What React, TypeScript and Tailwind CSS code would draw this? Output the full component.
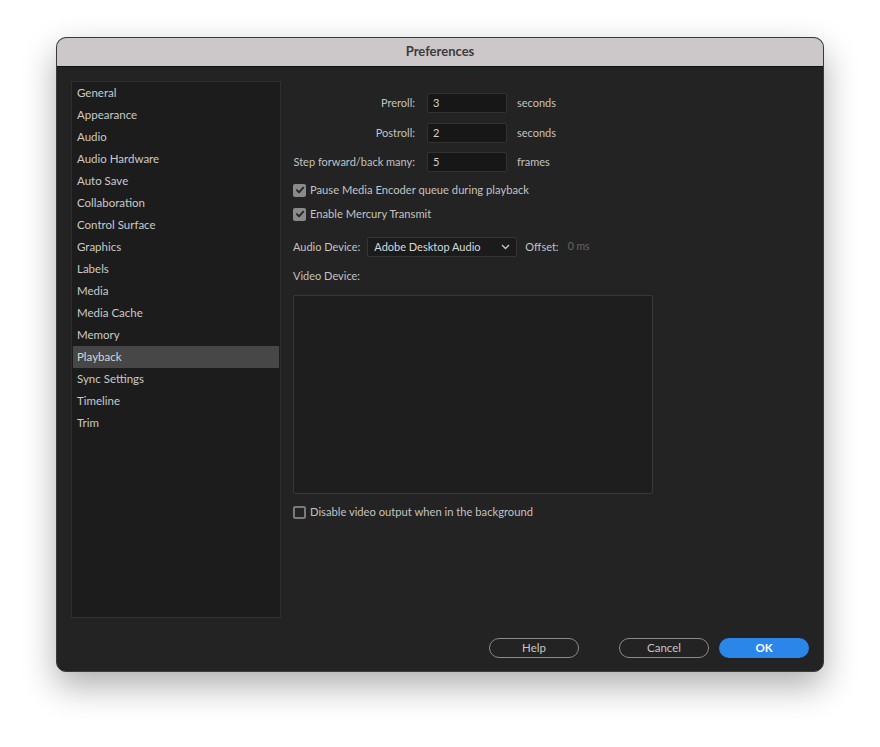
import React from 'react';

const sections = [
  'General',
  'Appearance',
  'Audio',
  'Audio Hardware',
  'Auto Save',
  'Collaboration',
  'Control Surface',
  'Graphics',
  'Labels',
  'Media',
  'Media Cache',
  'Memory',
  'Playback',
  'Sync Settings',
  'Timeline',
  'Trim',
];

const font = { fontFamily: 'Lato, "Open Sans", sans-serif' };

const NumberRow = ({ label, value, unit }: { label: string; value: string; unit: string }) => (
  <div className="flex items-center h-[20px] whitespace-nowrap">
    <span className="w-[123px] text-right pr-[1px]">{label}</span>
    <div className="ml-[11px] w-[80px] h-[20px] bg-[#171717] border border-[#323232] rounded-[2px] flex items-center pl-[5px] text-[#d0d0d0]">
      {value}
    </div>
    <span className="ml-[10px]">{unit}</span>
  </div>
);

const Checkbox = ({ checked, label }: { checked: boolean; label: string }) => (
  <div className="flex items-center h-[14px] whitespace-nowrap">
    <div
      className={`w-[13px] h-[13px] rounded-[2px] flex items-center justify-center ${
        checked ? 'bg-[#8a8a8a]' : 'border-2 border-[#7a7a7a]'
      }`}
    >
      {checked && (
        <svg width="10" height="10" viewBox="0 0 10 10">
          <path d="M1.8 5.2 L4 7.4 L8.3 2.6" fill="none" stroke="#242424" strokeWidth="1.8" strokeLinecap="round" strokeLinejoin="round" />
        </svg>
      )}
    </div>
    <span className="ml-[4px] text-[11.2px]">{label}</span>
  </div>
);

export default function App() {
  const active = 'Playback';
  return (
    <div className="w-[880px] h-[747px] bg-white pt-[37px] pl-[56px]" style={font}>
      <div className="w-[768px] h-[635px] rounded-[10px] overflow-hidden bg-[#232323] shadow-[0_14px_34px_rgba(0,0,0,0.32)] flex flex-col border border-[#3a3a3a]">
        <div className="h-[29px] bg-[#ccc8c9] border-b border-[#111] flex items-center justify-center shrink-0">
          <span className="text-[13px] font-bold text-[#3b3b3b]">Preferences</span>
        </div>

        <div className="flex flex-1 text-[11px] text-[#c2c2c2]">
          <div className="ml-[14px] mt-[14px] w-[210px] h-[537px] bg-[#1c1c1c] border border-[#2f2f2f] px-[1px] text-[11.5px]">
            {sections.map((s) => (
              <div
                key={s}
                className={`h-[22px] flex items-center pl-[4px] ${
                  s === active ? 'bg-[#474747] text-[#d6d6d6]' : 'text-[#cacaca]'
                }`}
              >
                {s}
              </div>
            ))}
          </div>

          <div className="flex flex-col">
            <div className="flex-1 ml-[12px] pt-[26px] flex flex-col">
              <div className="flex flex-col gap-[10px]">
                <NumberRow label="Preroll:" value="3" unit="seconds" />
                <NumberRow label="Postroll:" value="2" unit="seconds" />
                <div className="-mt-[1px]">
                  <NumberRow label="Step forward/back many:" value="5" unit="frames" />
                </div>
              </div>

              <div className="mt-[11px] flex flex-col gap-[10px]">
                <Checkbox checked label="Pause Media Encoder queue during playback" />
                <Checkbox checked label="Enable Mercury Transmit" />
              </div>

              <div className="mt-[16px] flex items-center h-[20px] whitespace-nowrap">
                <span>Audio Device:</span>
                <div className="ml-[7px] w-[150px] h-[20px] bg-[#1b1b1b] border border-[#353535] rounded-[2px] flex items-center justify-between pl-[6px] pr-[6px] text-[#d8d8d8]">
                  <span>Adobe Desktop Audio</span>
                  <svg width="9" height="6" viewBox="0 0 9 6">
                    <path d="M1 1 L4.5 4.5 L8 1" fill="none" stroke="#c8c8c8" strokeWidth="1.3" />
                  </svg>
                </div>
                <span className="ml-[8px]">Offset:</span>
                <span className="ml-[9px] text-[#666] text-[10.5px]">0 ms</span>
              </div>

              <div className="mt-[9px] h-[20px] flex items-center">Video Device:</div>

              <div className="mt-[9px] w-[360px] h-[199px] bg-[#1e1e1e] border border-[#383838] rounded-[2px]" />

              <div className="mt-[11px]">
                <Checkbox checked={false} label="Disable video output when in the background" />
              </div>
            </div>
          </div>
        </div>

        <div className="h-[33px] flex items-start justify-end pr-[14px] text-[11.5px] shrink-0">
          <button className="w-[90px] h-[20px] rounded-full border border-[#8a8a8a] text-[#c6c6c6] flex items-center justify-center">
            Help
          </button>
          <button className="ml-[40px] w-[90px] h-[20px] rounded-full border border-[#8a8a8a] text-[#c6c6c6] flex items-center justify-center">
            Cancel
          </button>
          <button className="ml-[10px] w-[90px] h-[20px] rounded-full bg-[#2a86e8] text-white font-bold flex items-center justify-center">
            OK
          </button>
        </div>
      </div>
    </div>
  );
}
